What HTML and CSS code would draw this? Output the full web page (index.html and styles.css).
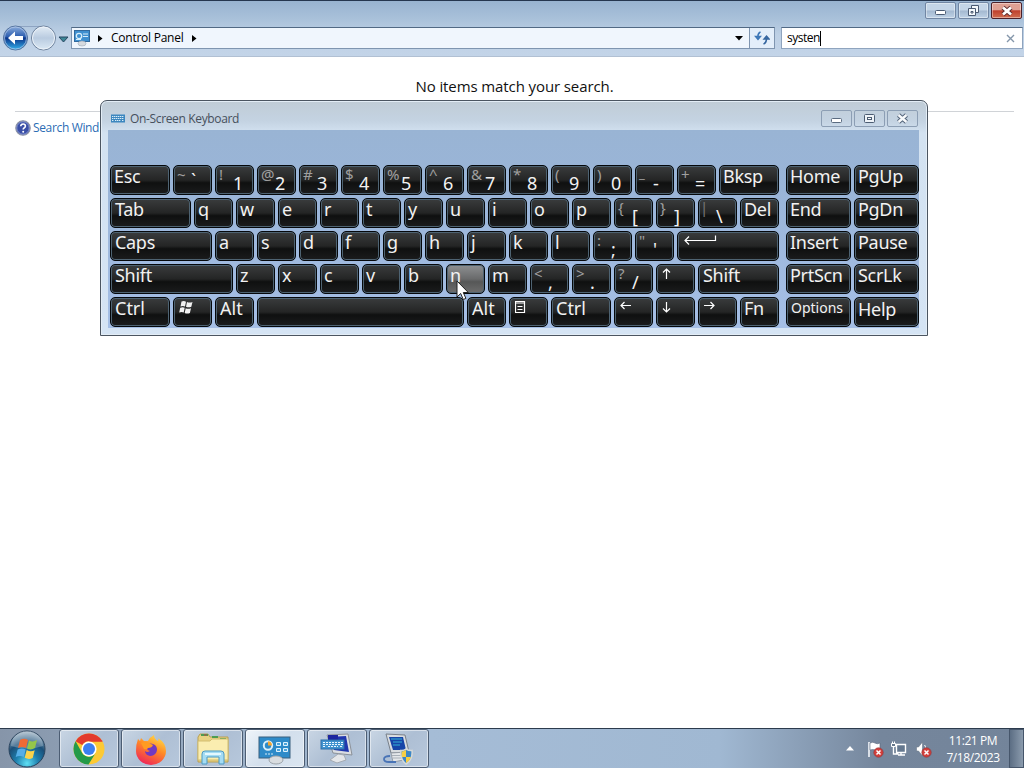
FILE: index.html
```
<!DOCTYPE html>
<html lang="en">
<head>
    <meta charset="UTF-8">
    <meta name="viewport" content="width=device-width, initial-scale=1.0">
    <title>Control Panel</title>
    <link rel="stylesheet" href="styles.css">
</head>
<body>
    <div class="explorer">
        <div class="chrome">
            <div class="titlebar">
                <div class="win-btn"><svg width="16" height="14" viewBox="0 0 16 14"><rect x="2.5" y="6.5" width="10" height="4" rx="1" fill="#fff" stroke="#4a5a72"/></svg></div>
                <div class="win-btn"><svg width="16" height="14" viewBox="0 0 16 14"><g fill="#f4f8fc" stroke="#4a5a72"><path d="M5.5 1.5h7v7h-7z"/><path d="M2.5 4.500h7v7h-7z"/><path d="M5 7.500h2v1.500h-2z"/></g></svg></div>
                <div class="win-btn close"><svg width="16" height="14" viewBox="0 0 16 14"><path d="M4 3.500l8 7M12 3.500l-8 7" stroke="#5c2a2c" stroke-width="4.500"/><path d="M4 3.500l8 7M12 3.500l-8 7" stroke="#fff" stroke-width="2.800"/></svg></div>
            </div>
            <div class="navbar">
                <svg class="nav-buttons" width="70" height="28" viewBox="0 0 70 28">
                    <defs>
                        <linearGradient id="back" x1="0" y1="0" x2="0" y2="1">
                            <stop offset="0" stop-color="#8fb0de"/><stop offset=".45" stop-color="#2b5cae"/>
                            <stop offset=".5" stop-color="#0b3388"/><stop offset="1" stop-color="#35b4ee"/>
                        </linearGradient>
                        <linearGradient id="fwd" x1="0" y1="0" x2="0" y2="1">
                            <stop offset="0" stop-color="#e4edf6"/><stop offset=".5" stop-color="#b9cbe0"/><stop offset="1" stop-color="#dce9f5"/>
                        </linearGradient>
                    </defs>
                    <path d="M15 1.500h29" stroke="#8ea4c2"/>
                    <circle cx="15.500" cy="13" r="12" fill="url(#back)" stroke="#56749f"/>
                    <circle cx="15.500" cy="13" r="11" fill="none" stroke="#b7cbe8" stroke-opacity=".7"/>
                    <path d="M8 13l7-6.500v4.500h8v4h-8v4.500z" fill="#fff"/>
                    <circle cx="43.500" cy="13" r="12" fill="url(#fwd)" stroke="#6c809b"/>
                    <circle cx="43.500" cy="13" r="11" fill="none" stroke="#edf3f9"/>
                    <path d="M59 12h9l-4.500 5z" fill="#3d8796" stroke="#274762"/>
                </svg>
                <div class="address">
                    <svg width="20" height="20" viewBox="0 0 20 20"><rect x="2.500" y="2.500" width="15" height="11" fill="#3e8fd0" stroke="#31699d"/><circle cx="7" cy="8" r="2.700" fill="none" stroke="#d7eefa" stroke-width="1.300"/><path d="M11 6h5M11 8.500h5M4 11.500h5" stroke="#d7eefa"/><ellipse cx="10" cy="15.500" rx="4" ry="2.500" fill="#d6dadf" stroke="#9aa7b5" stroke-width=".6"/></svg>
                    <svg class="crumb-arrow" width="5" height="7"><path d="M0 0l4.500 3.500L0 7z"/></svg>
                    <span class="crumb">Control Panel</span>
                    <svg class="crumb-arrow" width="5" height="7"><path d="M0 0l4.500 3.500L0 7z"/></svg>
                    <svg class="drop" width="8" height="5"><path d="M0 0h8L4 4.500z"/></svg>
                    <div class="refresh"><svg width="16" height="16" viewBox="0 0 16 16"><path d="M6.500 2Q3.800 3 3.800 7M1.500 6.500h5L4 9.500z" fill="#4a83c0" stroke="#3d77b7" stroke-width="1.400"/><path d="M9.500 14q3-1 3-5M10 9h5l-2.500-3z" fill="#3f74b0" stroke="#35659e" stroke-width="1.400"/></svg></div>
                </div>
                <div class="search">
                    <span>systen</span><i class="caret"></i>
                    <svg class="clear" width="9" height="9"><path d="M1 1l7 7M8 1l-7 7" stroke="#8496aa" stroke-width="1.400"/></svg>
                </div>
            </div>
        </div>
        <div class="content">
            <p class="empty">No items match your search.</p>
            <div class="rule"></div>
            <div class="help-link">
                <svg width="16" height="16" viewBox="0 0 16 16"><circle cx="8" cy="8" r="7.200" fill="#3a4fa6" stroke="#8a91a3" stroke-width="1.200"/><circle cx="8" cy="8" r="6.200" fill="none" stroke="#a7b6ea" stroke-width=".6"/><path d="M5.700 6.300q.2-2.300 2.400-2.300t2.300 2q0 1.300-1.300 2-.9.500-.9 1.500" fill="none" stroke="#fff" stroke-width="1.600"/><circle cx="8.200" cy="11.700" r="1" fill="#fff"/></svg>
                <span>Search Wind</span>
            </div>
        </div>
    </div>

    <div class="osk">
        <div class="osk-title">
            <svg width="14" height="9" viewBox="0 0 14 9"><rect width="14" height="8" y=".5" fill="#3c87bf"/><path d="M1 2.500h12M1 4.500h12M1 6.500h2M4 6.500h6M11 6.500h2" stroke="#d9edf8" stroke-dasharray="1.400 .6"/></svg>
            <span>On-Screen Keyboard</span>
            <div class="osk-btn"><svg width="16" height="14" viewBox="0 0 16 14"><rect x="2.500" y="6.500" width="10" height="4" rx="1" fill="#fff" stroke="#5a6b80"/></svg></div>
            <div class="osk-btn"><svg width="16" height="14" viewBox="0 0 16 14"><rect x="2.500" y="2.500" width="10" height="8" rx="1" fill="#eef3f8" stroke="#4b5c72"/><rect x="5.500" y="5.500" width="4" height="2" fill="#fff" stroke="#4b5c72"/></svg></div>
            <div class="osk-btn"><svg width="16" height="14" viewBox="0 0 16 14"><path d="M3.500 3l8 7M11.500 3l-8 7" stroke="#53647a" stroke-width="4.400"/><path d="M3.500 3l8 7M11.500 3l-8 7" stroke="#f8fafc" stroke-width="2.400"/></svg></div>
        </div>
        <div class="keys">
            <div class="row">
                <div class="key w60">Esc</div>
                <div class="key dual flat"><sup>~</sup><b>`</b></div>
                <div class="key dual"><sup>!</sup><b>1</b></div>
                <div class="key dual"><sup>@</sup><b>2</b></div>
                <div class="key dual"><sup>#</sup><b>3</b></div>
                <div class="key dual"><sup>$</sup><b>4</b></div>
                <div class="key dual"><sup>%</sup><b>5</b></div>
                <div class="key dual"><sup>^</sup><b>6</b></div>
                <div class="key dual"><sup>&amp;</sup><b>7</b></div>
                <div class="key dual"><sup>*</sup><b>8</b></div>
                <div class="key dual"><sup>(</sup><b>9</b></div>
                <div class="key dual"><sup>)</sup><b>0</b></div>
                <div class="key dual"><sup class="under">_</sup><b>-</b></div>
                <div class="key dual"><sup>+</sup><b>=</b></div>
                <div class="key w60">Bksp</div>
                <div class="key side first">Home</div>
                <div class="key side">PgUp</div>
            </div>
            <div class="row">
                <div class="key w81">Tab</div>
                <div class="key">q</div>
                <div class="key">w</div>
                <div class="key">e</div>
                <div class="key">r</div>
                <div class="key">t</div>
                <div class="key">y</div>
                <div class="key">u</div>
                <div class="key">i</div>
                <div class="key">o</div>
                <div class="key">p</div>
                <div class="key dual"><sup>{</sup><b>[</b></div>
                <div class="key dual"><sup>}</sup><b>]</b></div>
                <div class="key dual"><sup class="bar">|</sup><b>\</b></div>
                <div class="key">Del</div>
                <div class="key side first">End</div>
                <div class="key side">PgDn</div>
            </div>
            <div class="row">
                <div class="key w102">Caps</div>
                <div class="key">a</div>
                <div class="key">s</div>
                <div class="key">d</div>
                <div class="key">f</div>
                <div class="key">g</div>
                <div class="key">h</div>
                <div class="key">j</div>
                <div class="key">k</div>
                <div class="key">l</div>
                <div class="key dual"><sup>:</sup><b>;</b></div>
                <div class="key dual"><sup>"</sup><b>'</b></div>
                <div class="key w102"><svg width="34" height="12" viewBox="0 0 34 12"><path d="M1 5.500h30.500v-5M5 1.500l-4 4 4 4"/></svg></div>
                <div class="key side first">Insert</div>
                <div class="key side">Pause</div>
            </div>
            <div class="row">
                <div class="key w123">Shift</div>
                <div class="key">z</div>
                <div class="key">x</div>
                <div class="key">c</div>
                <div class="key">v</div>
                <div class="key">b</div>
                <div class="key pressed">n</div>
                <div class="key">m</div>
                <div class="key dual"><sup>&lt;</sup><b>,</b></div>
                <div class="key dual"><sup>&gt;</sup><b>.</b></div>
                <div class="key dual"><sup>?</sup><b>/</b></div>
                <div class="key"><svg width="12" height="12" viewBox="0 0 12 12"><path d="M4.500 11V1M1 4.500l3.500-3.500L8 4.500"/></svg></div>
                <div class="key w81">Shift</div>
                <div class="key side first">PrtScn</div>
                <div class="key side">ScrLk</div>
            </div>
            <div class="row">
                <div class="key w60 ctrl">Ctrl</div>
                <div class="key"><svg class="flag" width="16" height="15" viewBox="0 0 16 15"><path d="M3.500 .5q2.500-1 4.500.2L7 5.500q-2-1-4.500 0zM9 1q2.500 1 5.500 0l-1.200 4.700q-2.800 1-5.300 0zM2.200 6.800q2.500-1 4.500 0L5.700 11.500q-2-1-4.500 0zM7.700 7.200q2.500 1 5.300 0l-1.100 4.700q-2.700 1-5.200 0z"/></svg></div>
                <div class="key alt">Alt</div>
                <div class="key space"></div>
                <div class="key alt">Alt</div>
                <div class="key"><svg class="menu" width="12" height="14" viewBox="0 0 12 14"><path d="M.5 .5h9v11h-9zM0 2h10M2.500 5.500h5M2.500 8.500h5"/></svg></div>
                <div class="key w60 ctrl">Ctrl</div>
                <div class="key"><svg width="12" height="12" viewBox="0 0 12 12"><path d="M11 4.500H1M4.500 1L1 4.500 4.500 8"/></svg></div>
                <div class="key"><svg width="12" height="12" viewBox="0 0 12 12"><path d="M4.500 1v10M1 7.500l3.500 3.500L8 7.500"/></svg></div>
                <div class="key"><svg width="12" height="12" viewBox="0 0 12 12"><path d="M0 4.500h10M6.500 1l3.500 3.500L6.500 8"/></svg></div>
                <div class="key">Fn</div>
                <div class="key side first small">Options</div>
                <div class="key side low">Help</div>
            </div>
        </div>
    </div>

    <svg class="cursor" width="14" height="21" viewBox="0 0 14 21"><path d="M1 1v16l3.700-3.500 2.600 6 2.600-1.100-2.600-5.900h5z" fill="#fff" stroke="#222"/></svg>

    <div class="taskbar">
        <div class="start">
            <svg width="40" height="40" viewBox="0 0 40 40">
                <defs>
                    <radialGradient id="orb" cx=".5" cy=".9" r=".9">
                        <stop offset="0" stop-color="#5fe0f4"/><stop offset=".35" stop-color="#1e7fae"/>
                        <stop offset=".65" stop-color="#1b4f78"/><stop offset="1" stop-color="#a9bccb"/>
                    </radialGradient>
                </defs>
                <circle cx="20" cy="20" r="18" fill="url(#orb)" stroke="#29425c"/>
                <path d="M4 17a16 15 0 0 1 32 0q-16 5-32 0z" fill="#fff" opacity=".25"/>
                <path d="M13 11q4-2.500 8 0l-2 8q-4-2-8 0z" fill="#ef6a34"/>
                <path d="M22 11.500q4 2 8-.5l-2 8q-4 2.500-8 .5z" fill="#94c64a"/>
                <path d="M10.700 20.500q4-2 8 0l-2 7.500q-4-2-8 0z" fill="#55aee8"/>
                <path d="M19.700 21q4 2.500 8 .2l-2 7.800q-4 2-8-.2z" fill="#fbd34c"/>
            </svg>
        </div>
        <div class="task">
            <svg width="32" height="32" viewBox="0 0 32 32"><circle cx="16" cy="16" r="15.500" fill="#fcc934"/><path d="M2.600 8.200A15.500 15.500 0 0 1 29.400 8.200H16A7.800 7.800 0 0 0 9.200 12z" fill="#e33b2e"/><path d="M2.600 8.200A15.500 15.500 0 0 0 15.500 31.500L22.500 20.200a7.800 7.800 0 0 1-13.200 0z" fill="#249a49"/><path d="M16 8.200h13.400" stroke="#e33b2e"/><circle cx="16" cy="16" r="7.600" fill="#fff"/><circle cx="16" cy="16" r="6" fill="#3c7ff0"/></svg>
        </div>
        <div class="task">
            <svg width="32" height="32" viewBox="0 0 32 32">
                <defs><linearGradient id="fox" x1=".8" y1="0" x2=".3" y2="1"><stop offset="0" stop-color="#ffe04a"/><stop offset=".45" stop-color="#ff8a26"/><stop offset="1" stop-color="#ee2459"/></linearGradient></defs>
                <path d="M3 6l2 2 1-3 3 3 4 0q2-4 6-6 0 4 4 6 1-2 0-3 8 5 8 13a14.500 13.500 0 0 1-30 0q0-7 2-12z" fill="url(#fox)"/>
                <path d="M11 12q5-3 9 0 3 3 1.500 7-2 4-6.500 4-5-1-5-5 2 2 5 0-4-1-4-6z" fill="#7139c2"/>
                <path d="M6 10q4-2 8 0l4 2q-1 3-5 3-1 2-4 1z" fill="#ff9b22"/>
            </svg>
        </div>
        <div class="task">
            <svg width="36" height="34" viewBox="0 0 36 34"><path d="M3 5l2-3h8l2 3h18v25H3z" fill="#e9d282" stroke="#b8a052"/><path d="M6 3h7M17 5h6M25 7h6" stroke="#4e9d50" stroke-width="2"/><path d="M9 3h3" stroke="#c44"/><path d="M3 9h12l2-2h16v21H3z" fill="#faedb0" stroke="#d1bd70"/><path d="M7 32V22q0-3 3-3h16q3 0 3 3v10h-5v-7H12v7z" fill="#a5dcf3" stroke="#4d9ac4"/><path d="M10 22h16" stroke="#e4f8ff" stroke-width="2"/></svg>
        </div>
        <div class="task active">
            <svg width="36" height="32" viewBox="0 0 36 32"><rect x="2" y="4" width="31" height="21" fill="#2e8bc9" stroke="#3a617e"/><circle cx="11" cy="12.500" r="4.200" fill="none" stroke="#dbeff9" stroke-width="2"/><path d="M11 8.300a4.200 4.200 0 0 1 4 4.200h-4z" fill="#f6a52f"/><path d="M19.500 9.500h4v3h-4zM26.500 9.500h4v3h-4zM19.500 15.500h4v3h-4zM26.500 15.500h4v3h-4z" fill="#4da5dc" stroke="#e0f3fc"/><path d="M8 21h8" stroke="#d4ebf7" stroke-dasharray="2 1"/><path d="M19 23v4" stroke="#ccc" stroke-width="4"/><ellipse cx="19" cy="27" rx="7" ry="4" fill="#d9dde0" stroke="#9ca3a9"/></svg>
        </div>
        <div class="task">
            <svg width="36" height="34" viewBox="0 0 36 34"><path d="M8 3l21-1 4 21-19-2z" fill="#dadde2" stroke="#8b9199"/><path d="M10 5l17-1 3 16-15-2z" fill="#2037ae"/><path d="M9 3h10v5H9z" fill="#1d27a0"/><path d="M19 22l6 1 2 5-9 3-7-3z" fill="#e4e6e9" stroke="#a5abb3"/><rect x="2" y="8" width="23" height="9" fill="#4193cf" stroke="#2d6eaa"/><path d="M4 10.500h20M4 12.500h20M4 14.500h3M9 14.500h10M21 14.500h3" stroke="#ebf7ff" stroke-dasharray="2 1"/></svg>
        </div>
        <div class="task">
            <svg width="36" height="34" viewBox="0 0 36 34"><path d="M5 2l19 1 4 17-18 1z" fill="#d8dce0" stroke="#777f89"/><path d="M8 5l14 0 3 13-13 0z" fill="#1745a8"/><path d="M10 7h11M12 10h9M12 13h7" stroke="#36b2d6"/><path d="M10 21l15-1 3 7-16 3z" fill="#e3e6e9" stroke="#969da6"/><path d="M11 23.500h9M12 26h8" stroke="#a9b0b8"/><path d="M9 24q-6 0-6 3t5 3h7" fill="none" stroke="#4974b6" stroke-width="1.800"/><path d="M25 17q3.500 2 6 1.500 1 9-6 13.500-6-4.500-5-13.500 2.500.5 5-1.500z" fill="#3b86c6" stroke="#d6d9d8" stroke-width="1.500"/><path d="M25 18q-2.600 1.600-4.200 1.400Q20.500 23 21 25h4zM25 25h5q-1.500 4-5 6z" fill="#f6cf45"/></svg>
        </div>
        <div class="tray">
            <svg width="8" height="5"><path d="M0 4.500h8L4 0z" fill="#fff"/></svg>
            <svg width="18" height="18" viewBox="0 0 18 18"><path d="M3 2v15" stroke="#f4f7fa" stroke-width="1.600"/><path d="M4 3q3-1.500 5 0t5 0v7q-3 1-5 0t-5 0z" fill="#fff" stroke="#57657a" stroke-width=".6"/><circle cx="12.500" cy="12.500" r="4.700" fill="#d33f3c" stroke="#8e3236" stroke-width=".6"/><path d="M10.500 10.500l4 4M14.500 10.500l-4 4" stroke="#fff" stroke-width="1.500"/></svg>
            <svg width="18" height="18" viewBox="0 0 18 18"><path d="M6.500 4.500h9v8h-9zM8 15h7M11 13v2M3.500 6v8h5" fill="#65788f" stroke="#fff" stroke-width="1.400"/><path d="M1.500 3.500h4v3h-4zM2.500 1.500v2M4.500 1.500v2" fill="#66788c" stroke="#fff"/></svg>
            <svg width="18" height="18" viewBox="0 0 18 18"><path d="M2.500 7h2l4-5v14l-4-5h-2z" fill="#fff" stroke="#6b7889" stroke-width=".6"/><path d="M10.500 5q1 1 1 2.500" fill="none" stroke="#fff"/><circle cx="12.500" cy="12.500" r="4.700" fill="#d33f3c" stroke="#8e3236" stroke-width=".6"/><path d="M10.500 10.500l4 4M14.500 10.500l-4 4" stroke="#fff" stroke-width="1.500"/></svg>
        </div>
        <div class="clock">
            <div>11:21 PM</div>
            <div>7/18/2023</div>
        </div>
        <div class="show-desktop"></div>
    </div>
</body>
</html>
```
FILE: styles.css
```
* {
    box-sizing: border-box;
}
body {
    margin: 0;
    width: 1024px;
    height: 768px;
    overflow: hidden;
    display: flex;
    flex-direction: column;
    font-family: "Open Sans", "Noto Sans", sans-serif;
    font-size: 12px;
    background: #fff;
}
svg {
    display: block;
    flex: none;
}
.explorer {
    flex: 1;
}
.chrome {
    height: 57px;
    border-top: 1px solid #25364f;
    border-bottom: 1px solid #b1c0d3;
    background: linear-gradient(#98b3d0, #a9c1da 18px, #bdd0e5 34px, #c3d4e8);
}
.titlebar {
    display: flex;
    justify-content: flex-end;
    gap: 2px;
    height: 24px;
    padding: 1px 2px 0 0;
}
.win-btn {
    width: 31px;
    height: 17px;
    display: flex;
    align-items: center;
    justify-content: center;
    border: 1px solid #7186a3;
    border-radius: 2px;
    background: linear-gradient(#c4d5e7 48%, #a3b8d0 52%, #bfd2e6);
    box-shadow: inset 0 0 0 1px rgba(255,255,255,0.4);
}
.win-btn.close {
    border-color: #4c2029;
    background: linear-gradient(#dfa093 45%, #bf402d 52%, #d06d50);
}
.navbar {
    display: flex;
    height: 28px;
}
.nav-buttons {
    margin-right: 1px;
}
.address {
    width: 704px;
    height: 22px;
    margin-top: 2px;
    display: flex;
    align-items: center;
    border: 1px solid #7f95b0;
    border-top-color: #516984;
    background: #f0f6fd;
}
.crumb-arrow {
    margin: 0 8px 0 6px;
}
.crumb {
    padding-bottom: 1px;
    letter-spacing: -0.25px;
}
.address .crumb + .crumb-arrow {
    margin-left: 9px;
}
.drop {
    margin-left: auto;
    margin-right: 6px;
}
.refresh {
    width: 25px;
    height: 20px;
    display: flex;
    align-items: center;
    justify-content: center;
    border-left: 1px solid #7f95b0;
    background: #e3eefa;
}
.search {
    width: 242px;
    height: 22px;
    margin: 2px 0 0 6px;
    padding: 0 7px 0 5px;
    display: flex;
    align-items: center;
    border: 1px solid #8fa4be;
    border-top-color: #516984;
    background: #fff;
    letter-spacing: -0.5px;
}
.search span {
    padding-bottom: 1px;
}
.caret {
    width: 1px;
    height: 15px;
    background: #000;
}
.clear {
    margin-left: auto;
}
.content {
    padding: 0 10px 0 15px;
}
.empty {
    margin: 0;
    padding: 17px 0 0;
    height: 54px;
    text-align: center;
    font-size: 15px;
    line-height: 24px;
    letter-spacing: -0.1px;
    color: #111;
}
.rule {
    height: 1px;
    background: #d0d3d7;
}
.help-link {
    display: flex;
    align-items: center;
    gap: 2px;
    margin-top: 7px;
    color: #2b6cb4;
    letter-spacing: -0.35px;
}

/* on-screen keyboard */
.osk {
    position: absolute;
    left: 100px;
    top: 100px;
    width: 828px;
    height: 236px;
    padding: 0 8px 8px 7px;
    border: 1px solid #4b5561;
    border-radius: 7px 7px 0 0;
    background: linear-gradient(#c0ccd6, #c4d3e2 20px, #d3e2f1 32px, #d5e4f4);
    box-shadow: inset 0 0 0 1px #e3edf6;
}
.osk-title {
    display: flex;
    align-items: center;
    height: 29px;
    padding: 6px 1px 0 3px;
    color: #46505c;
}
.osk-title span {
    margin: 0 auto 0 5px;
    letter-spacing: -0.35px;
}
.osk-btn {
    width: 31px;
    height: 17px;
    margin-left: 2px;
    display: flex;
    align-items: center;
    justify-content: center;
    border: 1px solid #8c9eb4;
    border-radius: 2px;
}
.keys {
    display: flex;
    flex-direction: column;
    gap: 3px;
    height: 198px;
    padding: 35px 0 0 2px;
    background: linear-gradient(#99b4d4, #9ab5d8 60px, #a5bfe6);
}
.row {
    display: flex;
    gap: 3px;
}
.key {
    flex: none;
    width: 39px;
    height: 30px;
    padding-left: 3px;
    overflow: hidden;
    font-family: "Noto Sans", "Open Sans", sans-serif;
    font-size: 18px;
    line-height: 20px;
    white-space: nowrap;
    color: #f2f2f2;
    border: 1px solid #05080b;
    border-radius: 5px;
    background: linear-gradient(#3a3c3d, #242525 50%, #0f1010 60%, #1b1c1d);
    box-shadow: inset 0 0 0 1px #4e6372;
    letter-spacing: -0.3px;
}
.w60 {
    width: 60px;
}
.w81 {
    width: 81px;
    padding-left: 4px;
}
.w102 {
    width: 102px;
    padding-left: 4px;
}
.w123 {
    width: 123px;
    padding-left: 4px;
}
.alt, .ctrl {
    padding-left: 4px;
    letter-spacing: 0;
}
.space {
    width: 207px;
}
.side {
    width: 65px;
}
.first {
    margin-left: 4px;
}
.small {
    padding-left: 4px;
    font-size: 14px;
    letter-spacing: 0;
}
.low {
    padding-top: 1px;
}
.pressed {
    background: linear-gradient(#8e9092, #696a6b 50%, #565757 60%, #6d6d6d);
}
.dual {
    display: flex;
}
.dual sup {
    width: 14px;
    flex: none;
    font-size: 15px;
    line-height: 17px;
    vertical-align: top;
    color: #a0a0a0;
}
.dual .under {
    font-size: 13px;
    line-height: 15px;
}
.dual .bar {
    margin-left: -2px;
    width: 16px;
    color: #777;
}
.dual b {
    font-weight: normal;
    padding-top: 7px;
}
.flat b {
    padding-top: 4px;
}
.key svg {
    margin: 3px 0 0 2px;
    fill: none;
    stroke: #fff;
    stroke-width: 1.2;
}
.key .flag {
    margin-left: 1px;
    fill: #f2f2f2;
    stroke: none;
}
.cursor {
    position: absolute;
    left: 456px;
    top: 280px;
}

.taskbar {
    height: 40px;
    display: flex;
    border-top: 1px solid #2c3b4d;
    background: linear-gradient(90deg, #8695a9, #99adc4 200px, #a5bcd6 430px, #a0b8d2 720px, #75869c 880px, #73849a);
}
.start {
    width: 59px;
    padding-left: 7px;
}
.task {
    width: 60px;
    margin-right: 2px;
    padding-right: 1px;
    display: flex;
    align-items: center;
    justify-content: center;
    border: 1px solid #4c5d73;
    border-radius: 3px;
    background: linear-gradient(135deg, #c9d6e4, #aebfd4 50%, #b7c8dc);
    box-shadow: inset 0 0 0 1px rgba(255,255,255,0.5);
}
.task.active {
    background: linear-gradient(135deg, #eef4fa, #d3dfec 50%, #dbe6f1);
}
.tray {
    margin-left: auto;
    display: flex;
    align-items: center;
    gap: 6px;
}
.tray svg:first-child {
    margin-right: 6px;
}
.clock {
    width: 70px;
    margin-left: 6px;
    margin-right: 1px;
    padding-top: 3px;
    text-align: center;
    line-height: 17px;
    letter-spacing: -0.4px;
    color: #fff;
}
.show-desktop {
    width: 15px;
    border: 1px solid #46566b;
    background: linear-gradient(90deg, #5c6e84, #8b9bad);
}
```
